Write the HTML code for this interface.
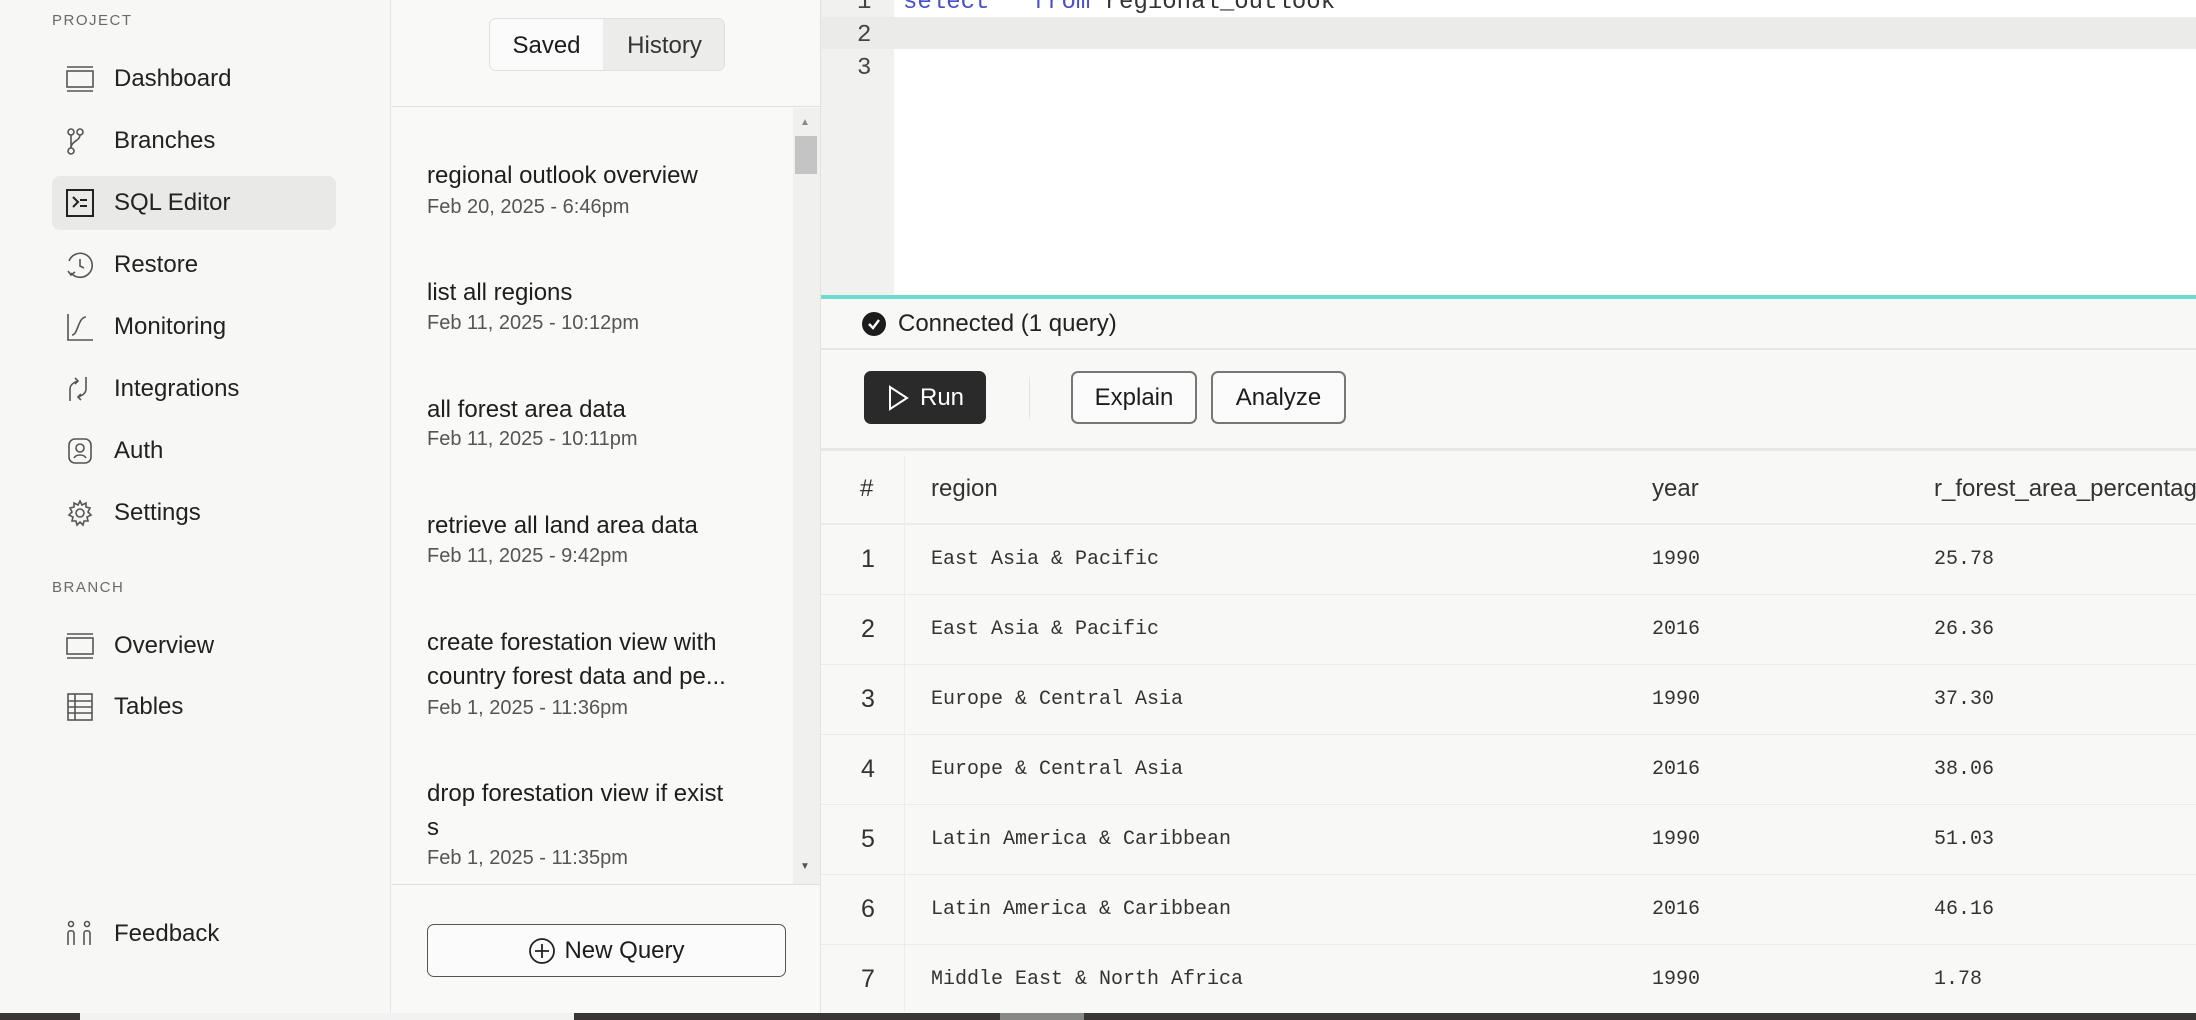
<!DOCTYPE html>
<html><head><meta charset="utf-8"><style>
*{box-sizing:border-box;margin:0;padding:0}
body{width:2196px;height:1020px;overflow:hidden;background:#f8f8f7;font-family:"Liberation Sans",sans-serif;color:#1c1c1c;position:relative}
.abs{position:absolute}
.side{left:0;top:0;width:391px;height:1014px;background:#f7f7f6;border-right:1px solid #e4e4e4}
.lbl{left:52px;font-size:15px;letter-spacing:1.5px;color:#6a6a6a}
.nav{left:52px;width:284px;height:54px;display:flex;align-items:center;font-size:24px;color:#222}
.nav svg{position:absolute;left:14px;top:13px}
.nav span{position:absolute;left:62px}
.act{background:#e9e9e8;border-radius:8px}
.mid{left:392px;top:0;width:429px;height:1014px;background:#f9f9f8;border-right:1px solid #e2e2e2}
.it{left:427px;font-size:24px;color:#1e1e1e;line-height:34px;white-space:nowrap}
.dt{left:427px;font-size:20px;color:#555}
.mono{font-family:"Liberation Mono",monospace}
.row{left:821px;width:1375px;height:70px;border-bottom:1px solid #ebebeb}
.row .n{position:absolute;left:40px;top:20px;font-size:25px;color:#333}
.row .c{position:absolute;top:23px;font-size:20px;color:#333;font-family:"Liberation Mono",monospace;white-space:nowrap}
.btn{border:2px solid #777;border-radius:7px;font-size:24px;display:flex;align-items:center;justify-content:center;background:#fbfbfb}
.th{top:475px;font-size:24px;color:#333;white-space:nowrap}
</style></head><body>
<div class="abs side"></div>
<div class="abs lbl" style="top:12px">PROJECT</div>
<div class="abs nav" style="top:52px"><svg width="28" height="28" viewBox="0 0 28 28" fill="none" stroke="#555" stroke-width="1.6"><path d="M1 2h26M1 26h26"/><rect x="1" y="6" width="26" height="16"/></svg><span>Dashboard</span></div>
<div class="abs nav" style="top:114px"><svg width="28" height="28" viewBox="0 0 28 28" fill="none" stroke="#555" stroke-width="1.6"><circle cx="5" cy="5" r="3"/><circle cx="14" cy="5" r="3"/><circle cx="5" cy="24" r="3"/><path d="M5 8v13M14 8c0 6-9 6-9 13"/></svg><span>Branches</span></div>
<div class="abs nav act" style="top:176px"><svg width="28" height="28" viewBox="0 0 28 28" fill="none" stroke="#222" stroke-width="2"><rect x="1" y="1" width="26" height="26"/><path d="M7 8l5 5-5 5M14 11h7M14 17h7"/></svg><span>SQL Editor</span></div>
<div class="abs nav" style="top:238px"><svg width="28" height="28" viewBox="0 0 28 28" fill="none" stroke="#555" stroke-width="1.6"><path d="M5 22A12 12 0 1 0 3 10"/><path d="M14 8v7l4 2M2 20l3 4 4-3"/></svg><span>Restore</span></div>
<div class="abs nav" style="top:300px"><svg width="28" height="28" viewBox="0 0 28 28" fill="none" stroke="#555" stroke-width="1.6"><path d="M2 1v26h25M6 22c6 0 6-18 14-18"/></svg><span>Monitoring</span></div>
<div class="abs nav" style="top:362px"><svg width="28" height="28" viewBox="0 0 28 28" fill="none" stroke="#555" stroke-width="1.6"><path d="M4 26V14c0-6 8-8 8-8M20 2v12c0 6-8 8-8 8M9 3l3 3-3 3M15 19l-3 3 3 3"/></svg><span>Integrations</span></div>
<div class="abs nav" style="top:424px"><svg width="28" height="28" viewBox="0 0 28 28" fill="none" stroke="#555" stroke-width="1.6"><rect x="3" y="2" width="22" height="24" rx="6"/><circle cx="14" cy="11" r="4"/><path d="M8 21c2-4 10-4 12 0"/></svg><span>Auth</span></div>
<div class="abs nav" style="top:486px"><svg width="28" height="28" viewBox="0 0 28 28" fill="none" stroke="#555" stroke-width="1.6"><circle cx="14" cy="14" r="4"/><path d="M14 2l2 4 4-2 0 4 4 1-2 4 3 3-4 2 1 4-4 0-1 4-3-3-3 3-1-4-4 0 1-4-4-2 3-3-2-4 4-1 0-4 4 2z"/></svg><span>Settings</span></div>
<div class="abs lbl" style="top:579px">BRANCH</div>
<div class="abs nav" style="top:619px"><svg width="28" height="28" viewBox="0 0 28 28" fill="none" stroke="#555" stroke-width="1.6"><path d="M1 2h26M1 26h26"/><rect x="1" y="6" width="26" height="16"/></svg><span>Overview</span></div>
<div class="abs nav" style="top:680px"><svg width="28" height="28" viewBox="0 0 28 28" fill="none" stroke="#555" stroke-width="1.6"><rect x="2" y="1" width="24" height="26"/><path d="M2 8h24M2 14h24M2 20h24M9 1v26"/></svg><span>Tables</span></div>
<div class="abs nav" style="top:907px"><svg width="28" height="28" viewBox="0 0 28 28" fill="none" stroke="#555" stroke-width="1.6"><circle cx="5" cy="4" r="2.5"/><circle cx="21" cy="4" r="2.5"/><path d="M2 25V13c0-3 6-3 6 0v12M18 25V13c0-3 6-3 6 0v12"/></svg><span>Feedback</span></div>

<div class="abs mid"></div>
<div class="abs" style="left:489px;top:18px;width:236px;height:53px;border:1px solid #e0e0e0;border-radius:7px;background:#fbfbfb;overflow:hidden;font-size:24px">
<div class="abs" style="left:0;top:0;width:113px;height:53px;display:flex;align-items:center;justify-content:center">Saved</div>
<div class="abs" style="left:113px;top:0;width:123px;height:53px;background:#ececeb;display:flex;align-items:center;justify-content:center;color:#333">History</div></div>
<div class="abs" style="left:392px;top:106px;width:429px;height:1px;background:#e0e0e0"></div>
<div class="abs" style="left:793px;top:108px;width:27px;height:776px;background:#f0f0ef"></div>
<div class="abs" style="left:795px;top:136px;width:22px;height:38px;background:#c4c4c4"></div>
<div class="abs" style="left:800px;top:117px;font-size:10px;color:#888">▲</div>
<div class="abs" style="left:800px;top:861px;font-size:10px;color:#555">▼</div>
<div class="abs it" style="top:159px">regional outlook overview</div><div class="abs dt" style="top:196px">Feb 20, 2025 - 6:46pm</div>
<div class="abs it" style="top:276px">list all regions</div><div class="abs dt" style="top:312px">Feb 11, 2025 - 10:12pm</div>
<div class="abs it" style="top:393px">all forest area data</div><div class="abs dt" style="top:428px">Feb 11, 2025 - 10:11pm</div>
<div class="abs it" style="top:509px">retrieve all land area data</div><div class="abs dt" style="top:545px">Feb 11, 2025 - 9:42pm</div>
<div class="abs it" style="top:626px">create forestation view with<br>country forest data and pe...</div><div class="abs dt" style="top:697px">Feb 1, 2025 - 11:36pm</div>
<div class="abs it" style="top:777px">drop forestation view if exist<br>s</div><div class="abs dt" style="top:847px">Feb 1, 2025 - 11:35pm</div>
<div class="abs" style="left:392px;top:884px;width:429px;height:1px;background:#e0e0e0"></div>
<div class="abs btn" style="left:427px;top:924px;width:359px;height:53px;border-width:1.5px;border-color:#555"><svg width="28" height="28" viewBox="0 0 28 28" fill="none" stroke="#222" stroke-width="1.8" style="margin-right:8px"><circle cx="14" cy="14" r="12"/><path d="M14 7v14M7 14h14"/></svg>New Query</div>

<div class="abs" style="left:821px;top:0;width:1375px;height:295px;background:#fff"></div>
<div class="abs" style="left:821px;top:0;width:73px;height:295px;background:#f1f1f0"></div>
<div class="abs" style="left:821px;top:17px;width:1375px;height:32px;background:#ebebea"></div>
<div class="abs mono" style="left:857px;top:-14px;font-size:24px;line-height:33px;color:#444">1<br>2<br>3</div>
<div class="abs mono" style="left:903px;top:-14px;font-size:24px;line-height:33px;color:#333"><span style="color:#4a50c8">select</span> <span style="color:#666">*</span> <span style="color:#4a50c8">from</span> regional_outlook</div>
<div class="abs" style="left:821px;top:295px;width:1375px;height:4px;background:#6ddbd0"></div>
<div class="abs" style="left:862px;top:312px;width:24px;height:24px;border-radius:50%;background:#1c1c1c"><svg width="24" height="24" viewBox="0 0 24 24" fill="none" stroke="#fff" stroke-width="2.4"><path d="M7 12l4 4 6-8"/></svg></div>
<div class="abs" style="left:898px;top:310px;font-size:24px;color:#222">Connected (1 query)</div>
<div class="abs" style="left:821px;top:348px;width:1375px;height:2px;background:#e6e6e6"></div>
<div class="abs" style="left:864px;top:371px;width:122px;height:53px;background:#2a2a2a;border-radius:7px;color:#fff;font-size:24px;display:flex;align-items:center;justify-content:center"><svg width="24" height="26" viewBox="0 0 24 26" fill="none" stroke="#fff" stroke-width="2" style="margin-right:10px"><path d="M4 2v22l17-11z"/></svg>Run</div>
<div class="abs" style="left:1029px;top:377px;width:1px;height:42px;background:#e3e3e3"></div>
<div class="abs btn" style="left:1071px;top:371px;width:126px;height:53px">Explain</div>
<div class="abs btn" style="left:1211px;top:371px;width:135px;height:53px">Analyze</div>
<div class="abs" style="left:821px;top:448px;width:1375px;height:3px;background:#e8e8e8"></div>
<div class="abs" style="left:904px;top:455px;width:1px;height:556px;background:#ececec"></div>
<div class="abs" style="left:821px;top:451px;width:1375px;height:74px;border-bottom:2px solid #ececec"></div>
<div class="abs th" style="left:860px">#</div>
<div class="abs th" style="left:931px">region</div>
<div class="abs th" style="left:1652px">year</div>
<div class="abs th" style="left:1934px">r_forest_area_percentage</div>
<div class="abs row" style="top:525px"><span class="n">1</span><span class="c" style="left:110px">East Asia &amp; Pacific</span><span class="c" style="left:831px">1990</span><span class="c" style="left:1113px">25.78</span></div>
<div class="abs row" style="top:595px"><span class="n">2</span><span class="c" style="left:110px">East Asia &amp; Pacific</span><span class="c" style="left:831px">2016</span><span class="c" style="left:1113px">26.36</span></div>
<div class="abs row" style="top:665px"><span class="n">3</span><span class="c" style="left:110px">Europe &amp; Central Asia</span><span class="c" style="left:831px">1990</span><span class="c" style="left:1113px">37.30</span></div>
<div class="abs row" style="top:735px"><span class="n">4</span><span class="c" style="left:110px">Europe &amp; Central Asia</span><span class="c" style="left:831px">2016</span><span class="c" style="left:1113px">38.06</span></div>
<div class="abs row" style="top:805px"><span class="n">5</span><span class="c" style="left:110px">Latin America &amp; Caribbean</span><span class="c" style="left:831px">1990</span><span class="c" style="left:1113px">51.03</span></div>
<div class="abs row" style="top:875px"><span class="n">6</span><span class="c" style="left:110px">Latin America &amp; Caribbean</span><span class="c" style="left:831px">2016</span><span class="c" style="left:1113px">46.16</span></div>
<div class="abs row" style="top:945px;border:none"><span class="n">7</span><span class="c" style="left:110px">Middle East &amp; North Africa</span><span class="c" style="left:831px">1990</span><span class="c" style="left:1113px">1.78</span></div>
<div class="abs" style="left:0;top:1013px;width:2196px;height:7px;background:#3a3537"></div>
<div class="abs" style="left:80px;top:1013px;width:494px;height:7px;background:#f2f2f2"></div>
<div class="abs" style="left:1000px;top:1013px;width:84px;height:7px;background:#888"></div>
</body></html>
